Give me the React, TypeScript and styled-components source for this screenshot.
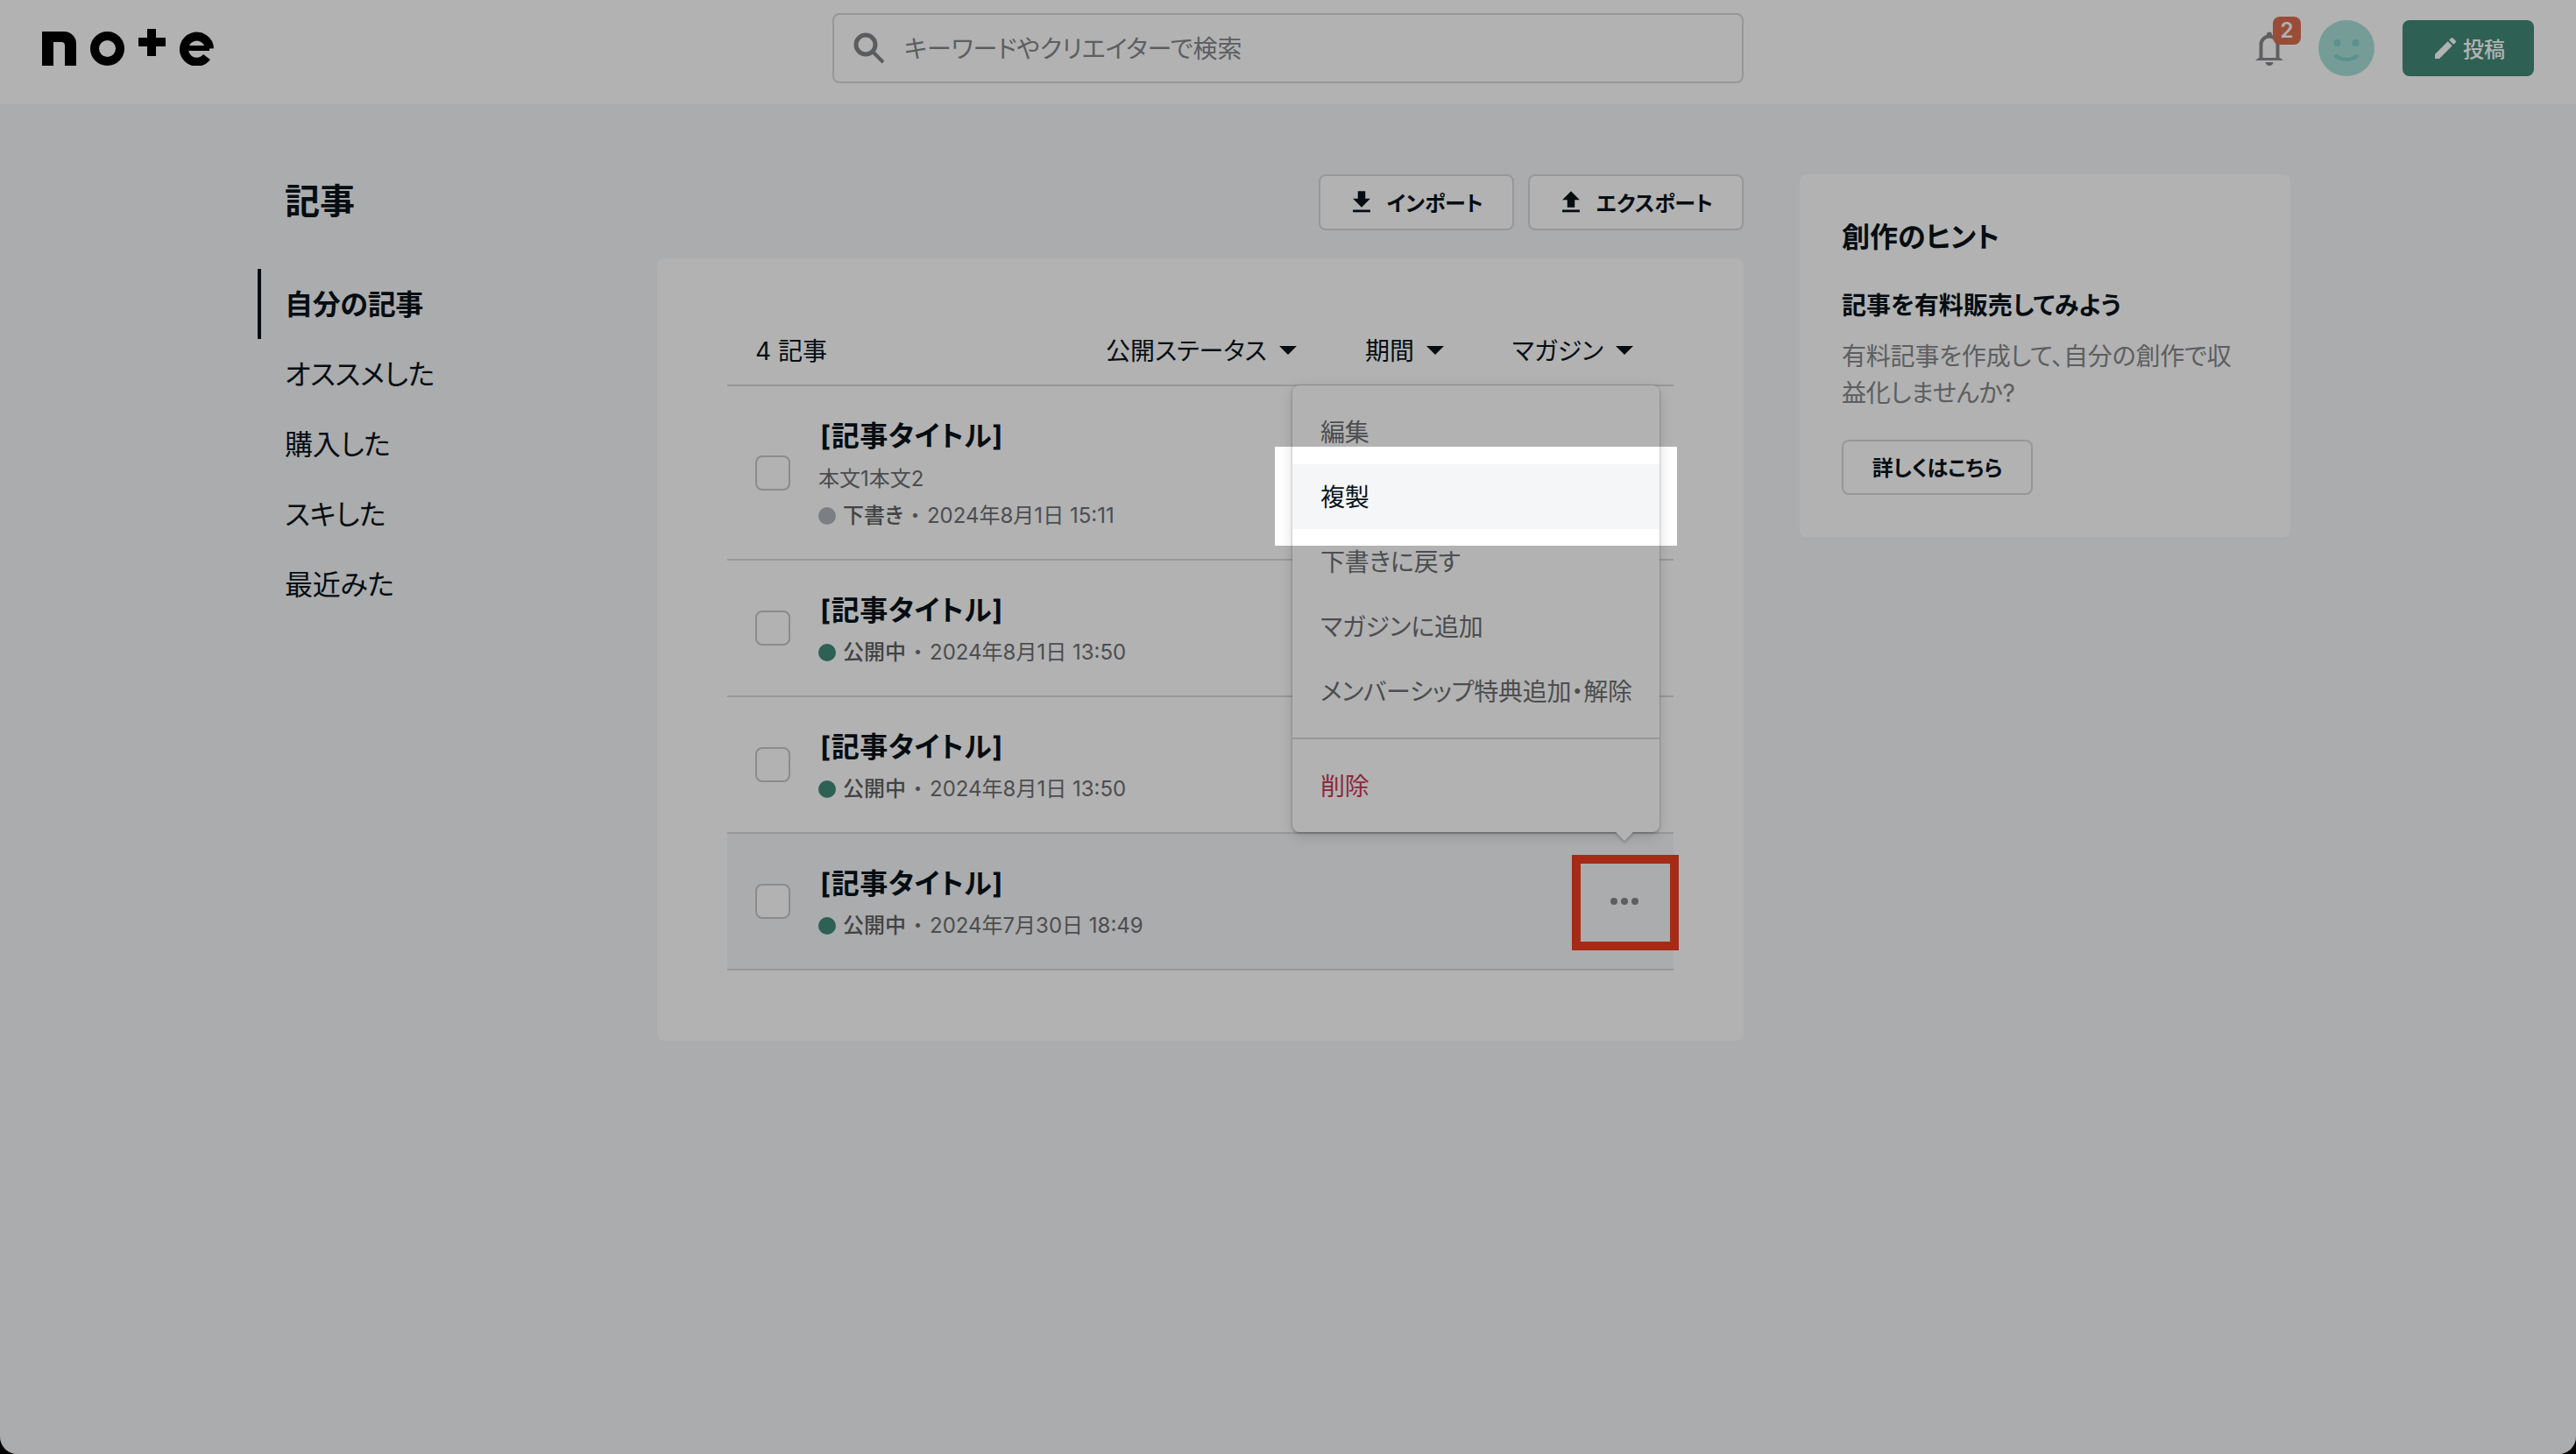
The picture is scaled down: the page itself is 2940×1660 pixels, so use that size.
import React from "react";
import styled, { createGlobalStyle } from "styled-components";

const GlobalStyle = createGlobalStyle`
  html, body {
    margin: 0;
    padding: 0;
    background: #000;
  }
  * {
    box-sizing: border-box;
  }
  body {
    font-family: Inter, "Noto Sans CJK JP", sans-serif;
    font-feature-settings: "palt";
    color: #08131a;
  }
`;

interface Article {
  body?: string;
  draft?: boolean;
  date: string;
  hovered?: boolean;
}

const articles: Array<Article> = [
  { body: "本文1本文2", draft: true, date: "2024年8月1日 15:11" },
  { date: "2024年8月1日 13:50" },
  { date: "2024年8月1日 13:50" },
  { date: "2024年7月30日 18:49", hovered: true },
];

const navItems = ["自分の記事", "オススメした", "購入した", "スキした", "最近みた"];
const filters = ["公開ステータス", "期間", "マガジン"];

const Logo = () => (
  <LogoSvg viewBox="0 0 196 42" width="196" height="42">
    <path d="M0 42V3h25a14 14 0 0 1 14 14v25H26V19a4 4 0 0 0-4-4H13v27z" fill="#000" />
    <circle cx="74.5" cy="22.5" r="14.5" fill="none" stroke="#000" strokeWidth="10" />
    <path d="M110 10h10V0h10v10h11v10h-11v11h-10V20h-10z" fill="#000" />
    <path d="M163 22h28" fill="none" stroke="#000" strokeWidth="6" />
    <path d="M191 22.5A14.5 14.5 0 1 0 188 32" fill="none" stroke="#000" strokeWidth="10" />
  </LogoSvg>
);

const SearchIcon = () => (
  <SearchSvg viewBox="0 0 36 36" width="36" height="36">
    <circle cx="14" cy="14" r="11" fill="none" stroke="#838487" strokeWidth="5" />
    <path d="M22 22l12 12" stroke="#838487" strokeWidth="4" />
  </SearchSvg>
);

const BellIcon = () => (
  <svg viewBox="0 0 32 39" width="32" height="39">
    <circle cx="16" cy="3.5" r="3" fill="#88898d" />
    <path d="M6.5 31V15a9.5 9.5 0 0 1 19 0v16" fill="none" stroke="#88898d" strokeWidth="4" />
    <path d="M0 33l4-3h24l4 3z" fill="#88898d" />
    <path d="M11.5 35h9a4.5 4 0 0 1-9 0z" fill="#88898d" />
  </svg>
);

const Smile = () => (
  <svg viewBox="0 0 64 64" width="64" height="64">
    <circle cx="21.5" cy="26" r="4" fill="#81d2ca" />
    <circle cx="42.5" cy="26" r="4" fill="#81d2ca" />
    <path d="M20 41q12 8 24 0" fill="none" stroke="#81d2ca" strokeWidth="4" strokeLinecap="round" />
  </svg>
);

const PencilIcon = () => (
  <svg viewBox="0 0 24 24" width="32" height="32" fill="#fff">
    <path d="M3 17.25V21h3.75L17.81 9.94l-3.75-3.75L3 17.25zM20.71 7.04a1 1 0 0 0 0-1.41l-2.34-2.34a1 1 0 0 0-1.41 0l-1.83 1.83 3.75 3.75 1.83-1.83z" />
  </svg>
);

const DownloadIcon = () => (
  <svg viewBox="0 0 24 24" width="34" height="34" fill="#08131a">
    <path d="M19 9h-4V3H9v6H5l7 7 7-7zM5 18v2h14v-2H5z" />
  </svg>
);

const UploadIcon = () => (
  <svg viewBox="0 0 24 24" width="34" height="34" fill="#08131a">
    <path d="M9 16h6v-6h4l-7-7-7 7h4v6zM5 18v2h14v-2H5z" />
  </svg>
);

const App = () => {
  return (
    <Frame>
      <GlobalStyle />
      <Header>
        <Logo />
        <SearchBox>
          <SearchIcon />
          <Placeholder>キーワードやクリエイターで検索</Placeholder>
        </SearchBox>
        <HeaderRight>
          <BellWrap>
            <BellIcon />
            <Badge>2</Badge>
          </BellWrap>
          <Avatar>
            <Smile />
          </Avatar>
          <PostButton>
            <PencilIcon />
            <span>投稿</span>
          </PostButton>
        </HeaderRight>
      </Header>

      <Columns>
        <Sidebar>
          <PageTitle>記事</PageTitle>
          <Nav>
            {navItems.map((item, i) => (
              <NavItem key={item} $active={i === 0}>
                {item}
              </NavItem>
            ))}
          </Nav>
        </Sidebar>

        <Main>
          <Actions>
            <ActionButton>
              <DownloadIcon />
              <span>インポート</span>
            </ActionButton>
            <ActionButton>
              <UploadIcon />
              <span>エクスポート</span>
            </ActionButton>
          </Actions>
          <Panel>
            <Toolbar>
              <Count>4 記事</Count>
              <Filters>
                {filters.map((f) => (
                  <Filter key={f}>
                    {f}
                    <Caret />
                  </Filter>
                ))}
              </Filters>
            </Toolbar>
            <List>
              {articles.map((a, i) => (
                <Row key={i} $hovered={a.hovered}>
                  <Check />
                  <RowText>
                    <RowTitle>[記事タイトル]</RowTitle>
                    {a.body && <RowBody>{a.body}</RowBody>}
                    <Meta>
                      <Dot $draft={a.draft} />
                      <Status>{a.draft ? "下書き" : "公開中"}</Status>
                      <Sep>・</Sep>
                      <span>{a.date}</span>
                    </Meta>
                  </RowText>
                  {a.hovered && (
                    <MoreButton>
                      <i />
                      <i />
                      <i />
                    </MoreButton>
                  )}
                </Row>
              ))}
            </List>
            <Menu>
              <MenuGroup>
                <MenuItem>編集</MenuItem>
                <MenuItem $hovered>複製</MenuItem>
                <MenuItem>下書きに戻す</MenuItem>
                <MenuItem>マガジンに追加</MenuItem>
                <MenuItem>メンバーシップ特典追加・解除</MenuItem>
              </MenuGroup>
              <MenuGroup>
                <MenuItem $danger>削除</MenuItem>
              </MenuGroup>
            </Menu>
          </Panel>
        </Main>

        <Card>
          <CardTitle>創作のヒント</CardTitle>
          <CardSub>記事を有料販売してみよう</CardSub>
          <CardText>
            有料記事を作成して、自分の創作で収
            <br />
            益化しませんか?
          </CardText>
          <MoreLink>詳しくはこちら</MoreLink>
        </Card>
      </Columns>

      <Spotlight />
      <Callout />
    </Frame>
  );
};

const Frame = styled.div`
  position: relative;
  width: 2940px;
  height: 1660px;
  overflow: hidden;
  background: #f5f6f8;
  border-radius: 0 0 20px 20px;
`;

const Header = styled.header`
  display: grid;
  grid-template-columns: 902px 1040px 1fr;
  align-items: center;
  height: 119px;
  padding: 0 48px 9px 48px;
  background: #fff;
`;

const LogoSvg = styled.svg`
  display: block;
  margin-top: -2px;
`;

const SearchBox = styled.div`
  display: flex;
  align-items: center;
  height: 80px;
  padding-left: 22px;
  border: 2px solid #d8d9dc;
  border-radius: 8px;
`;

const SearchSvg = styled.svg`
  flex: none;
`;

const Placeholder = styled.span`
  margin-left: 22px;
  padding-bottom: 2px;
  font-size: 28px;
  color: #85878a;
`;

const HeaderRight = styled.div`
  display: flex;
  align-items: center;
  justify-content: flex-end;
`;

const BellWrap = styled.div`
  position: relative;
  display: flex;
  width: 32px;
  height: 39px;
  margin-top: 1px;
  margin-right: 40px;
`;

const Badge = styled.span`
  position: absolute;
  top: -17px;
  left: 20px;
  width: 32px;
  height: 32px;
  border-radius: 8px;
  background: #dc6f52;
  color: #fff;
  font-size: 24px;
  font-weight: 600;
  line-height: 32px;
  text-align: center;
`;

const Avatar = styled.div`
  width: 64px;
  height: 64px;
  margin-right: 32px;
  border-radius: 50%;
  background: #aae0d9;

  svg {
    display: block;
  }
`;

const PostButton = styled.button`
  display: flex;
  align-items: center;
  justify-content: center;
  gap: 4px;
  width: 150px;
  height: 64px;
  padding: 0;
  border: 0;
  border-radius: 8px;
  background: #438a77;
  color: #fff;
  font-family: inherit;
  font-feature-settings: inherit;
  font-size: 24px;
  font-weight: 500;

  span {
    padding-bottom: 2px;
  }
`;

const Columns = styled.div`
  display: grid;
  grid-template-columns: 456px 1240px 624px;
  align-items: start;
  padding: 80px 0 0 294px;
`;

const Sidebar = styled.aside`
  display: flex;
  flex-direction: column;
`;

const PageTitle = styled.h1`
  margin: 0;
  padding: 1px 0 0 31px;
  font-size: 40px;
  font-weight: 700;
  line-height: 60px;
`;

const Nav = styled.nav`
  margin-top: 47px;
`;

const NavItem = styled.div<{ $active?: boolean }>`
  display: flex;
  align-items: center;
  height: 80px;
  padding: 0 0 4px 27px;
  border-left: 4px solid ${({ $active }) => ($active ? "#08131a" : "transparent")};
  font-size: 32px;
  letter-spacing: -0.3px;
  font-weight: ${({ $active }) => ($active ? 700 : 400)};
`;

const Main = styled.main`
  display: flex;
  flex-direction: column;
  gap: 32px;
`;

const Actions = styled.div`
  display: flex;
  justify-content: flex-end;
  gap: 16px;
`;

const ActionButton = styled.button`
  display: flex;
  align-items: center;
  gap: 12px;
  height: 64px;
  padding: 0 33px 0 30px;
  border: 2px solid #d8d9dc;
  border-radius: 8px;
  background: #fff;
  color: #08131a;
  font-family: inherit;
  font-feature-settings: inherit;
  font-size: 24px;
  font-weight: 700;

  span {
    padding-bottom: 2px;
  }
`;

const Panel = styled.section`
  position: relative;
  padding: 80px;
  border-radius: 8px;
  background: #fff;
`;

const Toolbar = styled.div`
  display: flex;
  align-items: center;
  justify-content: space-between;
  height: 64px;
  padding: 0 46px 17px 32px;
`;

const Count = styled.span`
  font-size: 28px;
`;

const Filters = styled.div`
  display: flex;
  gap: 78px;
`;

const Filter = styled.div`
  display: flex;
  align-items: center;
  gap: 14px;
  font-size: 28px;
`;

const Caret = styled.span`
  width: 0;
  height: 0;
  margin-top: 2px;
  border-left: 10px solid transparent;
  border-right: 10px solid transparent;
  border-top: 10px solid #08131a;
`;

const List = styled.div`
  border-top: 2px solid #d8d9dc;
`;

const Row = styled.div<{ $hovered?: boolean }>`
  display: flex;
  align-items: center;
  padding: 33px 16px 31px 32px;
  border-bottom: 2px solid #d8d9dc;
  background: ${({ $hovered }) => ($hovered ? "#f5f6f8" : "#fff")};
`;

const Check = styled.span`
  flex: none;
  width: 40px;
  height: 40px;
  margin-top: -2px;
  border: 2px solid #c6c7ca;
  border-radius: 8px;
  background: #fff;
`;

const RowText = styled.div`
  flex: 1;
  margin-left: 32px;
`;

const RowTitle = styled.div`
  margin-left: 2px;
  font-size: 32px;
  font-weight: 700;
  letter-spacing: 0.6px;
  line-height: 48px;
`;

const RowBody = styled.div`
  margin: 7px 0 1px;
  font-size: 24px;
  line-height: 36px;
  color: #6d6f73;
`;

const Meta = styled.div`
  display: flex;
  align-items: center;
  margin-top: 6px;
  font-size: 24px;
  line-height: 36px;
  color: #6d6f73;
`;

const Dot = styled.span<{ $draft?: boolean }>`
  width: 20px;
  height: 20px;
  margin-right: 8px;
  border-radius: 50%;
  background: ${({ $draft }) => ($draft ? "#b0b6bd" : "#438a77")};
`;

const Status = styled.span`
  font-weight: 500;
  color: #5f6164;
`;

const Sep = styled.span`
  width: 27px;
  text-align: center;
`;

const MoreButton = styled.div`
  display: flex;
  align-items: center;
  justify-content: center;
  gap: 4px;
  width: 80px;
  height: 80px;
  margin-top: -2px;

  i {
    width: 8px;
    height: 8px;
    border-radius: 50%;
    background: #85878a;
  }
`;

const Menu = styled.div`
  position: absolute;
  top: 145px;
  left: 725px;
  z-index: 2;
  width: 419px;
  border-radius: 8px;
  background: #fff;
  box-shadow: 0 1px 3px rgba(8, 19, 26, 0.35), 0 4px 16px rgba(8, 19, 26, 0.14);

  &::after {
    content: "";
    position: absolute;
    left: 372px;
    bottom: -7px;
    width: 14px;
    height: 14px;
    background: #fff;
    transform: rotate(45deg);
    box-shadow: 2px 2px 3px rgba(8, 19, 26, 0.2);
  }
`;

const MenuGroup = styled.div`
  padding: 16px 0;

  & + & {
    border-top: 2px solid #d8d9dc;
  }
`;

const MenuItem = styled.div<{ $hovered?: boolean; $danger?: boolean }>`
  display: flex;
  align-items: center;
  height: 74px;
  padding: 0 0 2px 32px;
  font-size: 28px;
  letter-spacing: -0.2px;
  white-space: nowrap;
  background: ${({ $hovered }) => ($hovered ? "#f5f6f8" : "transparent")};
  color: ${({ $hovered, $danger }) => ($danger ? "#c93a55" : $hovered ? "#08131a" : "#6d6f73")};
`;

const Card = styled.aside`
  margin-left: 64px;
  padding: 48px;
  border-radius: 8px;
  background: #fff;
`;

const CardTitle = styled.h2`
  margin: 0;
  font-size: 32px;
  font-weight: 700;
  line-height: 48px;
`;

const CardSub = styled.h3`
  margin: 33px 0 0;
  font-size: 28px;
  font-weight: 700;
  line-height: 42px;
`;

const CardText = styled.p`
  margin: 16px 0 0;
  font-size: 28px;
  letter-spacing: -0.2px;
  line-height: 42px;
  color: #85878a;
  white-space: nowrap;
`;

const MoreLink = styled.button`
  display: block;
  width: 218px;
  height: 63px;
  margin-top: 32px;
  padding: 0 0 3px;
  border: 2px solid #d8d9dc;
  border-radius: 8px;
  background: #fff;
  color: #08131a;
  font-family: inherit;
  font-feature-settings: inherit;
  font-size: 24px;
  font-weight: 700;
`;

// dim layer with a hole around the hovered menu item
const Spotlight = styled.div`
  position: absolute;
  top: 510px;
  left: 1455px;
  z-index: 10;
  width: 459px;
  height: 113px;
  box-shadow: 0 0 0 4000px rgba(0, 0, 0, 0.3);
`;

const Callout = styled.div`
  position: absolute;
  top: 976px;
  left: 1794px;
  z-index: 11;
  width: 122px;
  height: 109px;
  border: 10px solid #a62b17;
`;

export default App;
